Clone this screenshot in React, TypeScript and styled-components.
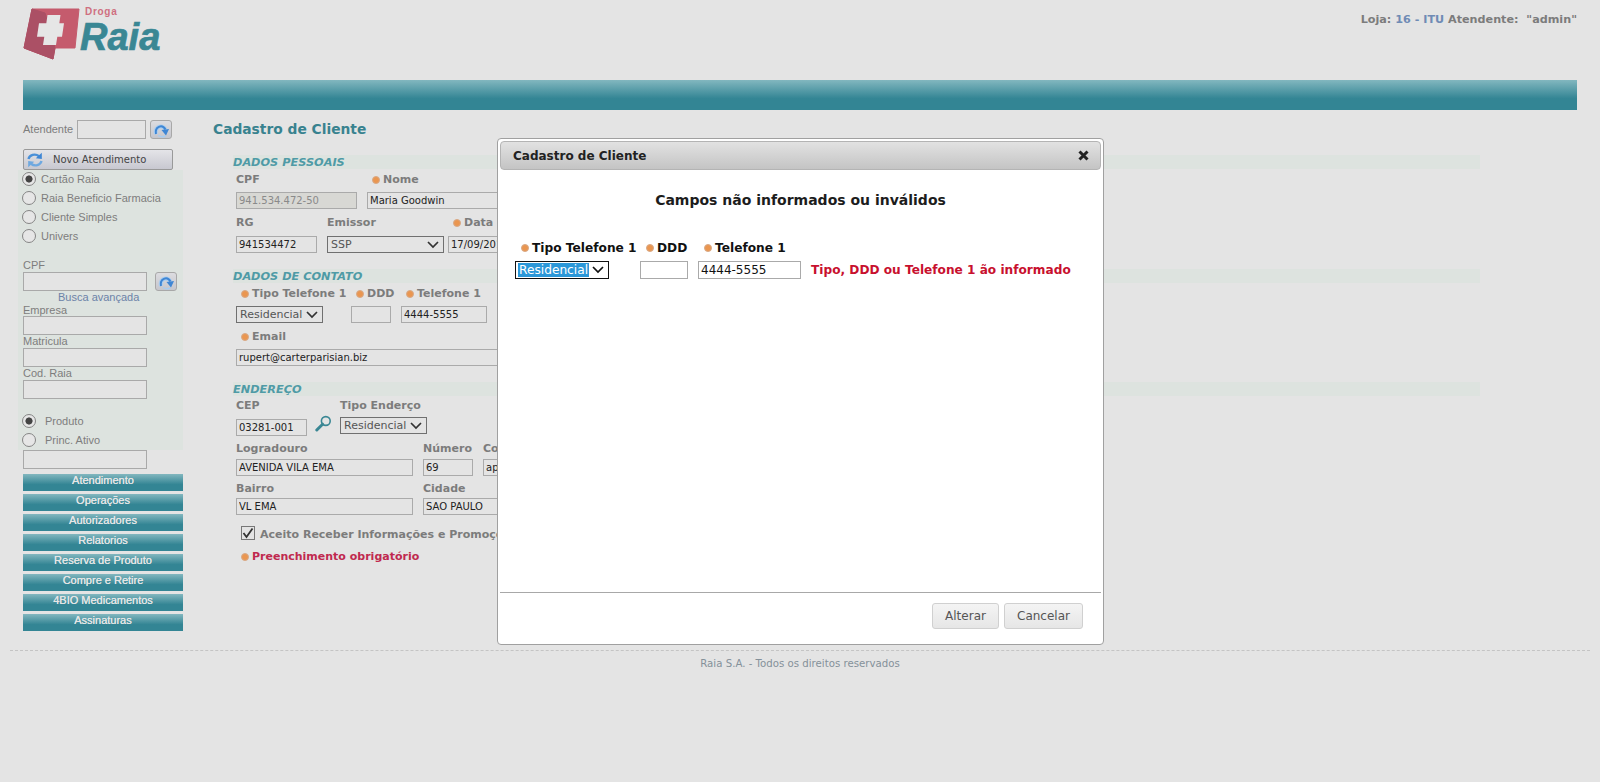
import React from 'react';
import styled, { createGlobalStyle } from 'styled-components';

const verdana = '"DejaVu Sans", Verdana, sans-serif';
const arial = '"Liberation Sans", Arial, sans-serif';
const teal = 'linear-gradient(to bottom, #82b7bf 0%, #338594 62%, #338594 100%)';

const GlobalStyle = createGlobalStyle`
  html, body {
    margin: 0;
    padding: 0;
    background: #e4e4e4;
    height: 782px;
    overflow: hidden;
  }
  * { box-sizing: border-box; }
`;

const Page = styled.div`
  position: relative;
  width: 1600px;
  height: 782px;
  padding: 0 23px;
  background: #e4e4e4;
  font-family: ${verdana};
`;

const Header = styled.div`
  display: flex;
  justify-content: space-between;
  height: 80px;
`;

const StoreInfo = styled.div`
  padding-top: 13px;
  font-size: 11.2px;
  line-height: 14px;
  font-weight: bold;
  color: #7c7c7c;
  white-space: pre;
  b { color: #6f8bb5; }
`;

const Band = styled.div`
  height: 30px;
  background: ${teal};
`;

const Body = styled.div`
  display: flex;
  height: 540px;
`;

const Sidebar = styled.div`
  width: 160px;
  padding-top: 10px;
  font-family: ${arial};
  font-size: 11px;
  color: #7d7d7d;
`;

const AttendantRow = styled.div`
  display: flex;
  align-items: center;
  height: 19px;
  gap: 4px;
`;

const AttendantLabel = styled.span`
  margin-bottom: 2px;
`;

const TextBox = styled.input<{ $w?: number }>`
  display: block;
  width: ${({ $w }) => ($w ? `${$w}px` : '124px')};
  height: 19px;
  padding: 0 2px;
  border: 1px solid #a9a9a9;
  background: #e4e4e4;
  font-family: ${verdana};
  font-size: 10px;
  color: #222;
  outline: none;
`;

const FieldBox = styled(TextBox)<{ $disabled?: boolean }>`
  height: 17px;
  border-color: #aaa;
  background: ${({ $disabled }) => ($disabled ? '#d8d8d4' : '#e4e4e4')};
  color: ${({ $disabled }) => ($disabled ? '#8a8a8a' : '#222')};
`;

const SmallIconButton = styled.button`
  display: flex;
  align-items: center;
  justify-content: center;
  width: 22px;
  height: 19px;
  padding: 0;
  border: 1px solid #a8a8a8;
  border-radius: 3px;
  background: linear-gradient(to bottom, #dcdce0, #c6c6cc);
`;

const NewButton = styled.button`
  display: flex;
  align-items: center;
  width: 150px;
  height: 21px;
  margin-top: 10px;
  padding: 0 0 0 3px;
  border: 1px solid #999;
  border-radius: 2px;
  background: linear-gradient(to bottom, #e4e4e8, #c8c8d0);
  font-family: ${verdana};
  font-size: 10px;
  color: #444;
  span { margin-left: 10px; }
`;

const FilterPanel = styled.div`
  width: 165px;
  height: 280px;
  margin-left: -5px;
  padding-left: 5px;
  background: #dde3df;
`;

const RadioRow = styled.label<{ $gap?: number }>`
  display: flex;
  align-items: center;
  height: 19px;
  padding-bottom: 2px;
  gap: ${({ $gap }) => $gap || 5}px;
  margin-left: -1px;
`;

const Radio = styled.input.attrs({ type: 'radio' })`
  appearance: none;
  width: 14px;
  height: 14px;
  margin: 0;
  border: 1px solid #858585;
  border-radius: 50%;
  background: #e6e6e6;
  &:checked {
    background: radial-gradient(circle, #444 0, #444 3.2px, #e6e6e6 3.9px);
  }
`;

const SideLabel = styled.div<{ $top?: number; $h?: number }>`
  height: ${({ $h }) => $h || 13}px;
  line-height: ${({ $h }) => $h || 13}px;
  margin-top: ${({ $top }) => $top || 0}px;
`;

const CpfRow = styled.div`
  display: flex;
  gap: 8px;
`;

const AdvancedLink = styled.a`
  display: block;
  width: 116px;
  margin-left: 35px;
  height: 13px;
  line-height: 13px;
  font-size: 11px;
  color: #6c82a8;
`;

const RadioGroup = styled.div`
  margin-top: 13px;
`;

const Menu = styled.div`
  display: flex;
  flex-direction: column;
  gap: 3px;
  margin-top: 5px;
`;

const MenuItem = styled.div`
  height: 17px;
  background: ${teal};
  font-size: 11px;
  line-height: 13px;
  text-align: center;
  color: #e6e6e6;
  text-shadow: 0 0 0.6px #e6e6e6;
`;

const Main = styled.div`
  width: 1364px;
  margin-left: 30px;
  padding-top: 10px;
`;

const PageTitle = styled.div`
  height: 19px;
  line-height: 19px;
  font-size: 13.8px;
  font-weight: bold;
  color: #38828f;
`;

const Form = styled.div`
  width: 1247px;
  margin: 16px 0 0 20px;
`;

const SectionBar = styled.div<{ $top?: number }>`
  height: 14px;
  margin-top: ${({ $top }) => $top || 0}px;
  background: #dde3df;
  font-size: 11.3px;
  line-height: 15px;
  font-weight: bold;
  font-style: italic;
  color: #4f9ba6;
`;

const Row = styled.div<{ $top?: number; $gap?: number }>`
  display: flex;
  align-items: flex-start;
  gap: ${({ $gap }) => $gap ?? 10}px;
  margin: ${({ $top }) => $top || 0}px 0 0 3px;
`;

const Field = styled.div<{ $w: number; $gap?: number; $pull?: number }>`
  display: flex;
  flex-direction: column;
  gap: ${({ $gap }) => $gap ?? 6}px;
  width: ${({ $w }) => $w}px;
  margin-left: ${({ $pull }) => $pull || 0}px;
`;

const Label = styled.div<{ $req?: boolean; $red?: boolean }>`
  display: flex;
  align-items: center;
  gap: 3px;
  height: 14px;
  padding-left: ${({ $req }) => ($req ? 5 : 0)}px;
  font-size: 11px;
  line-height: 14px;
  font-weight: bold;
  white-space: nowrap;
  color: ${({ $red }) => ($red ? '#c0294f' : '#7c7c7c')};
`;

const Dot = styled.i`
  flex: none;
  width: 8px;
  height: 8px;
  border-radius: 50%;
  background: #ea9650;
  border: 1px solid #d8aa88;
`;

const SelectBox = styled.div<{ $w: number }>`
  display: flex;
  align-items: center;
  justify-content: space-between;
  width: ${({ $w }) => $w}px;
  height: 17px;
  padding: 0 4px 0 3px;
  border: 1px solid #707070;
  font-size: 11px;
  color: #555;
  background: #e4e4e4;
`;

const SearchSlot = styled.div`
  width: 16px;
  height: 17px;
  margin: 16px 0 0 -1px;
`;

const CheckRow = styled.div`
  display: flex;
  align-items: flex-start;
  gap: 5px;
  height: 14px;
  margin: 11px 0 0 8px;
`;

const CheckLabel = styled(Label)`
  margin-top: 2px;
`;

const CheckBox = styled.div`
  display: flex;
  align-items: center;
  justify-content: center;
  width: 14px;
  height: 14px;
  border: 1px solid #777;
  background: #e4e4e4;
`;

const Required = styled.div`
  margin: 10px 0 0 3px;
`;

const Footer = styled.div`
  margin: 0 -13px;
  padding-top: 6px;
  border-top: 1px dashed #c4c4c4;
  font-size: 10.2px;
  line-height: 13px;
  text-align: center;
  color: #84919a;
`;

const Modal = styled.div`
  position: absolute;
  left: 497px;
  top: 138px;
  display: flex;
  flex-direction: column;
  width: 607px;
  height: 507px;
  padding: 2px 2px 0;
  border: 1px solid #a0a0a0;
  border-radius: 4px;
  background: #fff;
  font-family: ${verdana};
`;

const ModalBar = styled.div`
  display: flex;
  align-items: center;
  justify-content: space-between;
  flex: none;
  height: 29px;
  padding: 0 11px 0 12px;
  border: 1px solid #b4b4b4;
  border-radius: 4px;
  background: linear-gradient(to bottom, #e2e2e2, #c4c4c4);
  font-size: 12px;
  font-weight: bold;
  color: #222;
`;

const ModalHeading = styled.div`
  margin-top: 21px;
  height: 18px;
  line-height: 18px;
  text-align: center;
  font-size: 14px;
  font-weight: bold;
  color: #1c1c1c;
`;

const ModalBody = styled.div`
  flex: 1;
  padding: 32px 0 0 15px;
`;

const ModalLabels = styled.div`
  display: flex;
  height: 14px;
`;

const ModalLabel = styled.div<{ $w: number }>`
  display: flex;
  align-items: center;
  gap: 3px;
  width: ${({ $w }) => $w}px;
  padding-left: 6px;
  font-size: 12.2px;
  line-height: 14px;
  font-weight: bold;
  white-space: nowrap;
  color: #111;
`;

const ModalControls = styled.div`
  display: flex;
  align-items: center;
  margin-top: 6px;
`;

const FocusSelect = styled.div`
  display: flex;
  align-items: center;
  justify-content: space-between;
  width: 94px;
  height: 18px;
  padding: 0 4px 0 2px;
  border: 1px solid #111;
  font-size: 12.2px;
  color: #fff;
  span { background: #2b97d8; line-height: 14px; padding: 0 1px; }
`;

const ModalInput = styled.input<{ $w: number; $left: number }>`
  width: ${({ $w }) => $w}px;
  height: 18px;
  margin-left: ${({ $left }) => $left}px;
  padding: 0 2px;
  border: 1px solid #aaa;
  background: #fff;
  font-family: ${verdana};
  font-size: 12px;
  color: #111;
  outline: none;
`;

const ErrorText = styled.div`
  margin-left: 10px;
  font-size: 12.15px;
  font-weight: bold;
  white-space: nowrap;
  color: #c8102e;
`;

const ModalFooter = styled.div`
  display: flex;
  justify-content: flex-end;
  flex: none;
  gap: 5px;
  height: 52px;
  padding: 10px 18px 0 0;
  border-top: 1px solid #a8a8a8;
`;

const ModalButton = styled.button<{ $w: number }>`
  width: ${({ $w }) => $w}px;
  height: 26px;
  padding: 0;
  border: 1px solid #d0d0d0;
  border-radius: 3px;
  background: linear-gradient(to bottom, #f4f4f4, #e6e6e6);
  font-family: ${verdana};
  font-size: 12px;
  color: #555;
`;

const Logo = () => (
  <svg width="160" height="64" viewBox="0 0 160 64" style={{ display: 'block' }}>
    <path
      d="M9 9 H56 L52 48 H32 L30 59 L1 48 Z"
      fill="#c55b6d"
      stroke="#c55b6d"
      strokeWidth="1"
      strokeLinejoin="round"
    />
    <path d="M9 9 L22 13 L32 48 L30 59 L1 48 Z" fill="#ab5065" stroke="#ab5065" strokeWidth="1" strokeLinejoin="round" />
    <path d="M24.5 15 H37.5 L36.3 23.3 H41 L39 36.7 H34.3 L33 45 H20 L21.3 36.7 H14 L16 23.3 H23.3 Z" fill="#e6e6e6" />
    <text x="62" y="15" fontFamily={arial} fontSize="10" fontWeight="bold" fill="#cf6f80" letterSpacing="0.7">
      Droga
    </text>
    <text
      x="57"
      y="50"
      fontFamily={arial}
      fontSize="38"
      fontWeight="bold"
      fontStyle="italic"
      fill="#3a8794"
      stroke="#3a8794"
      strokeWidth="0.7"
    >
      Raia
    </text>
  </svg>
);

const RefreshIcon = () => (
  <svg width="17" height="16" viewBox="0 0 17 16" fill="none">
    <path d="M3 12 C1.5 5 9 1.5 12.5 7.5" stroke="#a9cdf0" strokeWidth="4" />
    <path d="M3 12 C1.5 5 9 1.5 12.5 7.5" stroke="#3f86d4" strokeWidth="2" />
    <path d="M8.5 8 L16 7 L13 13.5 Z" fill="#3f86d4" />
    <path d="M5 13.5 C7 15 10 15 12.5 14" stroke="#a9cdf0" strokeWidth="1.4" />
  </svg>
);

const CycleIcon = () => (
  <svg width="16" height="16" viewBox="0 0 16 16" fill="none">
    <path d="M1.5 7 C2.5 3 8 1 12 4.2" stroke="#4a90d8" strokeWidth="2.4" />
    <path d="M14.8 0.8 L14.8 7 L8.8 6.2 Z" fill="#3f86d4" />
    <path d="M14.5 9 C13.5 13 8 15 4 11.8" stroke="#6ea8e0" strokeWidth="2.4" />
    <path d="M1.2 15.2 L1.2 9 L7.2 9.8 Z" fill="#6ea8e0" />
  </svg>
);

const Chevron = ({ color = '#333' }: { color?: string }) => (
  <svg width="12" height="8" viewBox="0 0 12 8" fill="none">
    <path d="M1 1 L6 6 L11 1" stroke={color} strokeWidth="1.7" />
  </svg>
);

const SearchIcon = () => (
  <svg width="17" height="17" viewBox="0 0 17 17" fill="none">
    <circle cx="10.8" cy="6" r="4.4" stroke="#3a8794" strokeWidth="1.6" />
    <path d="M7.6 9.2 L1.8 15" stroke="#3a8794" strokeWidth="3" strokeLinecap="round" />
  </svg>
);

const menu = [
  'Atendimento',
  'Operações',
  'Autorizadores',
  'Relatorios',
  'Reserva de Produto',
  'Compre e Retire',
  '4BIO Medicamentos',
  'Assinaturas'
];

const App = () => (
  <Page>
    <GlobalStyle />
    <Header>
      <Logo />
      <StoreInfo>
        Loja: <b>16 - ITU</b> Atendente:  "admin"
      </StoreInfo>
    </Header>
    <Band />
    <Body>
      <Sidebar>
        <AttendantRow>
          <AttendantLabel>Atendente</AttendantLabel>
          <TextBox $w={69} readOnly />
          <SmallIconButton>
            <RefreshIcon />
          </SmallIconButton>
        </AttendantRow>
        <NewButton>
          <CycleIcon />
          <span>Novo Atendimento</span>
        </NewButton>
        <FilterPanel>
          <RadioRow>
            <Radio name="card" defaultChecked />
            Cartão Raia
          </RadioRow>
          <RadioRow>
            <Radio name="card" />
            Raia Beneficio Farmacia
          </RadioRow>
          <RadioRow>
            <Radio name="card" />
            Cliente Simples
          </RadioRow>
          <RadioRow>
            <Radio name="card" />
            Univers
          </RadioRow>
          <SideLabel $top={12} $h={14}>CPF</SideLabel>
          <CpfRow>
            <TextBox readOnly />
            <SmallIconButton>
              <RefreshIcon />
            </SmallIconButton>
          </CpfRow>
          <AdvancedLink>Busca avançada</AdvancedLink>
          <SideLabel $h={12}>Empresa</SideLabel>
          <TextBox readOnly />
          <SideLabel>Matricula</SideLabel>
          <TextBox readOnly />
          <SideLabel>Cod. Raia</SideLabel>
          <TextBox readOnly />
          <RadioGroup>
            <RadioRow $gap={9}>
              <Radio name="kind" defaultChecked />
              Produto
            </RadioRow>
            <RadioRow $gap={9}>
              <Radio name="kind" />
              Princ. Ativo
            </RadioRow>
          </RadioGroup>
        </FilterPanel>
        <TextBox readOnly />
        <Menu>
          {menu.map(item => (
            <MenuItem key={item}>{item}</MenuItem>
          ))}
        </Menu>
      </Sidebar>
      <Main>
        <PageTitle>Cadastro de Cliente</PageTitle>
        <Form>
          <SectionBar>DADOS PESSOAIS</SectionBar>
          <Row $top={4}>
            <Field $w={121} $gap={5}>
              <Label>CPF</Label>
              <FieldBox $w={121} $disabled readOnly defaultValue="941.534.472-50" />
            </Field>
            <Field $w={400} $gap={5}>
              <Label $req>
                <Dot />
                Nome
              </Label>
              <FieldBox $w={400} readOnly defaultValue="Maria Goodwin" />
            </Field>
          </Row>
          <Row $top={7}>
            <Field $w={81}>
              <Label>RG</Label>
              <FieldBox $w={81} readOnly defaultValue="941534472" />
            </Field>
            <Field $w={117}>
              <Label>Emissor</Label>
              <SelectBox $w={117}>
                SSP
                <Chevron />
              </SelectBox>
            </Field>
            <Field $w={100} $pull={-6}>
              <Label $req>
                <Dot />
                Data
              </Label>
              <FieldBox $w={100} readOnly defaultValue="17/09/2012" />
            </Field>
          </Row>
          <SectionBar $top={16}>DADOS DE CONTATO</SectionBar>
          <Row $top={4} $gap={0}>
            <Field $w={115} $gap={5}>
              <Label $req>
                <Dot />
                Tipo Telefone 1
              </Label>
              <SelectBox $w={87}>
                Residencial
                <Chevron />
              </SelectBox>
            </Field>
            <Field $w={50} $gap={5}>
              <Label $req>
                <Dot />
                DDD
              </Label>
              <FieldBox $w={40} readOnly />
            </Field>
            <Field $w={86} $gap={5}>
              <Label $req>
                <Dot />
                Telefone 1
              </Label>
              <FieldBox $w={86} readOnly defaultValue="4444-5555" />
            </Field>
          </Row>
          <Row $top={7}>
            <Field $w={400} $gap={5}>
              <Label $req>
                <Dot />
                Email
              </Label>
              <FieldBox $w={400} readOnly defaultValue="rupert@carterparisian.biz" />
            </Field>
          </Row>
          <SectionBar $top={16}>ENDEREÇO</SectionBar>
          <Row $top={3} $gap={9}>
            <Field $w={71} $gap={6}>
              <Label>CEP</Label>
              <FieldBox $w={71} readOnly defaultValue="03281-001" />
            </Field>
            <SearchSlot>
              <SearchIcon />
            </SearchSlot>
            <Field $w={87} $gap={4}>
              <Label>Tipo Enderço</Label>
              <SelectBox $w={87}>
                Residencial
                <Chevron />
              </SelectBox>
            </Field>
          </Row>
          <Row $top={6}>
            <Field $w={177} $gap={3}>
              <Label>Logradouro</Label>
              <FieldBox $w={177} readOnly defaultValue="AVENIDA VILA EMA" />
            </Field>
            <Field $w={50} $gap={3}>
              <Label>Número</Label>
              <FieldBox $w={50} readOnly defaultValue="69" />
            </Field>
            <Field $w={100} $gap={3}>
              <Label>Complemento</Label>
              <FieldBox $w={100} readOnly defaultValue="apto 12" />
            </Field>
          </Row>
          <Row $top={6}>
            <Field $w={177} $gap={2}>
              <Label>Bairro</Label>
              <FieldBox $w={177} readOnly defaultValue="VL EMA" />
            </Field>
            <Field $w={150} $gap={2}>
              <Label>Cidade</Label>
              <FieldBox $w={150} readOnly defaultValue="SAO PAULO" />
            </Field>
          </Row>
          <CheckRow>
            <CheckBox>
              <svg width="12" height="12" viewBox="0 0 12 12" fill="none">
                <path d="M1.5 6 L4.5 10 L10.5 1.5" stroke="#333" strokeWidth="1.8" />
              </svg>
            </CheckBox>
            <CheckLabel>Aceito Receber Informações e Promoções</CheckLabel>
          </CheckRow>
          <Required>
            <Label $req $red>
              <Dot />
              Preenchimento obrigatório
            </Label>
          </Required>
        </Form>
      </Main>
    </Body>
    <Footer>Raia S.A. - Todos os direitos reservados</Footer>
    <Modal>
      <ModalBar>
        Cadastro de Cliente
        <svg width="11" height="11" viewBox="0 0 11 11" fill="none">
          <path d="M1.5 1.5 L9.5 9.5 M9.5 1.5 L1.5 9.5" stroke="#222" strokeWidth="3" />
        </svg>
      </ModalBar>
      <ModalHeading>Campos não informados ou inválidos</ModalHeading>
      <ModalBody>
        <ModalLabels>
          <ModalLabel $w={125}>
            <Dot />
            Tipo Telefone 1
          </ModalLabel>
          <ModalLabel $w={58}>
            <Dot />
            DDD
          </ModalLabel>
          <ModalLabel $w={100}>
            <Dot />
            Telefone 1
          </ModalLabel>
        </ModalLabels>
        <ModalControls>
          <FocusSelect>
            <span>Residencial</span>
            <Chevron color="#111" />
          </FocusSelect>
          <ModalInput $w={48} $left={31} readOnly />
          <ModalInput $w={103} $left={10} readOnly defaultValue="4444-5555" />
          <ErrorText>Tipo, DDD ou Telefone 1 ão informado</ErrorText>
        </ModalControls>
      </ModalBody>
      <ModalFooter>
        <ModalButton $w={67}>Alterar</ModalButton>
        <ModalButton $w={79}>Cancelar</ModalButton>
      </ModalFooter>
    </Modal>
  </Page>
);

export default App;
